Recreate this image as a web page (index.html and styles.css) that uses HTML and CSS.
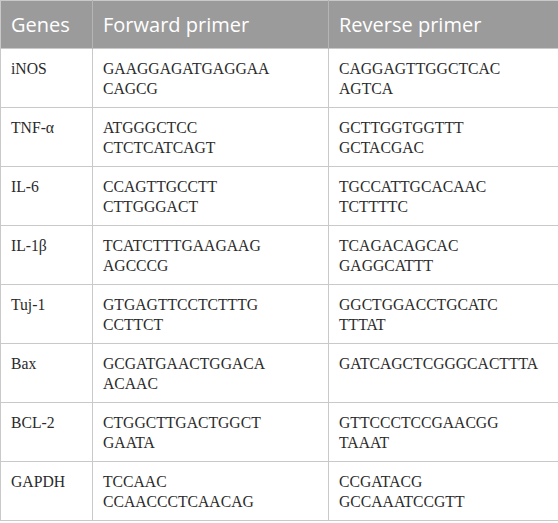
FILE: index.html
```html
<!DOCTYPE html>
<html>
<head>
<meta charset="utf-8">
<link rel="stylesheet" href="styles.css">
</head>
<body>
<table class="primers">
  <colgroup>
    <col class="c-gene">
    <col class="c-fwd">
    <col class="c-rev">
  </colgroup>
  <thead>
    <tr><th>Genes</th><th>Forward primer</th><th>Reverse primer</th></tr>
  </thead>
  <tbody>
    <tr><td>iNOS</td><td>GAAGGAGATGAGGAA<br>CAGCG</td><td>CAGGAGTTGGCTCAC<br>AGTCA</td></tr>
    <tr><td>TNF-α</td><td>ATGGGCTCC<br>CTCTCATCAGT</td><td>GCTTGGTGGTTT<br>GCTACGAC</td></tr>
    <tr><td>IL-6</td><td>CCAGTTGCCTT<br>CTTGGGACT</td><td>TGCCATTGCACAAC<br>TCTTTTC</td></tr>
    <tr><td>IL-1β</td><td>TCATCTTTGAAGAAG<br>AGCCCG</td><td>TCAGACAGCAC<br>GAGGCATTT</td></tr>
    <tr><td>Tuj-1</td><td>GTGAGTTCCTCTTTG<br>CCTTCT</td><td>GGCTGGACCTGCATC<br>TTTAT</td></tr>
    <tr><td>Bax</td><td>GCGATGAACTGGACA<br>ACAAC</td><td>GATCAGCTCGGGCACTTTA</td></tr>
    <tr><td>BCL-2</td><td>CTGGCTTGACTGGCT<br>GAATA</td><td>GTTCCCTCCGAACGG<br>TAAAT</td></tr>
    <tr><td>GAPDH</td><td>TCCAAC<br>CCAACCCTCAACAG</td><td>CCGATACG<br>GCCAAATCCGTT</td></tr>
  </tbody>
</table>
</body>
</html>
```

FILE: styles.css
```css
html, body {
  margin: 0;
  padding: 0;
  background: #ffffff;
}

.primers {
  border-collapse: collapse;
  width: 558px;
  table-layout: fixed;
  border: 1px solid #c9c9c9;
}

.c-gene { width: 92px; }
.c-fwd { width: 236px; }
.c-rev { width: 230px; }

.primers th {
  background: #9b9b9b;
  color: #ffffff;
  font-family: "Open Sans", "Liberation Sans", sans-serif;
  font-weight: 400;
  font-size: 20px;
  text-align: left;
  height: 48px;
  box-sizing: border-box;
  padding: 0 10px;
  border-left: 1px solid #b5b5b5;
  vertical-align: middle;
}

.primers th:first-child {
  border-left: none;
}

.primers td {
  font-family: "Liberation Serif", "DejaVu Serif", "Times New Roman", Times, serif;
  font-size: 15.7px;
  line-height: 20px;
  color: #2b2b2b;
  vertical-align: top;
  height: 59px;
  box-sizing: border-box;
  padding: 10px 10px 0 10px;
  border: 1px solid #c9c9c9;
}
```
